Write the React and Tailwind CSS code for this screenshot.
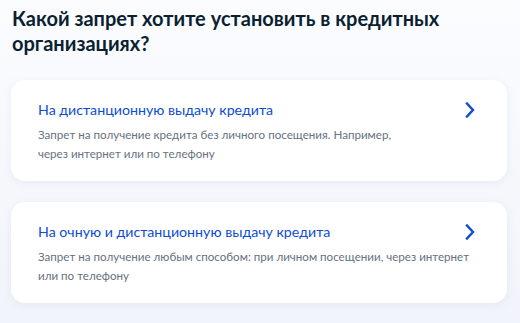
import React from 'react';

const options = [
  {
    title: 'На дистанционную выдачу кредита',
    lines: ['Запрет на получение кредита без личного посещения. Например,', 'через интернет или по телефону'],
  },
  {
    title: 'На очную и дистанционную выдачу кредита',
    lines: ['Запрет на получение любым способом: при личном посещении, через интернет', 'или по телефону'],
  },
];

function Chevron() {
  return (
    <svg width="10" height="16" viewBox="0 0 10 16" fill="none" className="shrink-0 mt-[2px]">
      <path d="M2 1.5L8 8L2 14.5" stroke="#0d4cd3" strokeWidth="2.4" strokeLinecap="square" />
    </svg>
  );
}

function App() {
  return (
    <div
      className="w-[520px] h-[323px] overflow-hidden bg-gradient-to-b from-[#fbfcfe] to-[#f1f4fa] text-[#0b1f33]"
      style={{ fontFamily: 'Lato, "Noto Sans", sans-serif' }}
    >
      <h1 className="pl-[12px] pt-[6px] w-[480px] text-[20px] leading-[25px] font-bold text-[#0b1f33]">
        Какой запрет хотите установить в кредитных организациях?
      </h1>
      <div className="mt-[24px] pl-[11px] pr-[13px] flex flex-col gap-[21px]">
        {options.map((o) => (
          <div
            key={o.title}
            className="h-[101px] bg-white rounded-[14px] shadow-[0_2px_8px_rgba(170,185,210,0.18)] pl-[27px] pr-[32px] pt-[20px] flex justify-between"
          >
            <div className="flex-1 min-w-0">
              <div className="text-[14.2px] leading-[20px] text-[#0d4cd3]">{o.title}</div>
              <div className="mt-[5px] text-[11.6px] leading-[19px] text-[#66727f] whitespace-nowrap">
                {o.lines[0]}
                <br />
                {o.lines[1]}
              </div>
            </div>
            <Chevron />
          </div>
        ))}
      </div>
    </div>
  );
}

export default App;
